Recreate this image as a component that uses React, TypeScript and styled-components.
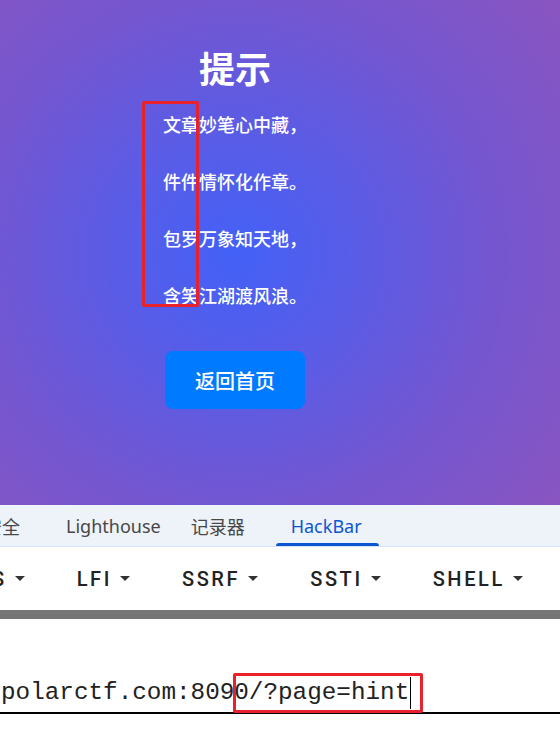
import React from "react";
import styled, { createGlobalStyle } from "styled-components";

const GlobalStyle = createGlobalStyle`
  html, body { margin: 0; padding: 0; background: #fff; }
  body { overflow: hidden; }
  * { box-sizing: border-box; }
`;

const Page = styled.div`
  width: 560px;
  height: 730px;
  display: flex;
  flex-direction: column;
  overflow: hidden;
  font-family: "Noto Sans", "Noto Sans CJK SC", sans-serif;
`;

const Hero = styled.section`
  position: relative;
  height: 505px;
  flex: none;
  background: radial-gradient(circle farthest-corner at 235px 255px, #4361f7 0%, #5a5ce6 30%, #7456d0 62%, #8a55c0 100%);
`;

const Column = styled.div`
  width: 470px;
  display: flex;
  flex-direction: column;
  align-items: center;
  padding-top: 46px;
`;

const Title = styled.h1`
  margin: 0;
  font-family: "Noto Sans CJK SC", sans-serif;
  font-size: 36px;
  line-height: 43px;
  font-weight: 700;
  color: #fff;
`;

const Poem = styled.div`
  width: 144px;
  margin-top: 22px;
  display: flex;
  flex-direction: column;
  gap: 30px;
`;

const Line = styled.p`
  margin: 0;
  font-family: "Noto Sans CJK SC", sans-serif;
  font-size: 18px;
  line-height: 27px;
  font-weight: 500;
  color: #fff;
  white-space: nowrap;
`;

const HomeButton = styled.button`
  margin-top: 42px;
  width: 140px;
  height: 58px;
  border: none;
  border-radius: 8px;
  background: #007bff;
  color: #fff;
  font-family: "Noto Sans CJK SC", sans-serif;
  font-size: 20px;
  font-weight: 500;
  cursor: pointer;
`;

const Mark = styled.div<{ $l: number; $t: number; $w: number; $h: number }>`
  position: absolute;
  left: ${(p) => p.$l}px;
  top: ${(p) => p.$t}px;
  width: ${(p) => p.$w}px;
  height: ${(p) => p.$h}px;
  border: 3px solid #e8212b;
  border-radius: 2px;
  pointer-events: none;
`;

const TabBar = styled.nav`
  height: 42px;
  flex: none;
  background: #eef2f9;
  border-bottom: 1px solid #d3e3fd;
  display: flex;
  overflow: hidden;
`;

const TabList = styled.div`
  display: flex;
  margin-left: -31px;
`;

const Tab = styled.div<{ $active?: boolean; $padRight?: number }>`
  position: relative;
  height: 41px;
  padding: 0 ${(p) => p.$padRight ?? 15}px 0 15px;
  display: flex;
  align-items: center;
  font-family: "Noto Sans", "Noto Sans CJK SC", sans-serif;
  font-size: 18px;
  color: ${(p) => (p.$active ? "#0b57d0" : "#474747")};
  white-space: nowrap;
  &::after {
    content: "";
    display: ${(p) => (p.$active ? "block" : "none")};
    position: absolute;
    left: 0;
    right: 0;
    bottom: -1px;
    height: 4px;
    border-radius: 3px 3px 0 0;
    background: #0b57d0;
  }
`;

const Toolbar = styled.div`
  height: 63px;
  flex: none;
  background: #fff;
  display: flex;
  align-items: center;
  overflow: hidden;
`;

const MenuList = styled.div`
  display: flex;
  margin-left: -64px;
`;

const MenuButton = styled.div`
  display: flex;
  align-items: center;
  padding: 0 26px;
  height: 40px;
  font-family: Roboto, "Noto Sans", sans-serif;
  font-size: 20px;
  font-weight: 500;
  letter-spacing: 2.6px;
  color: #222;
  text-transform: uppercase;
  white-space: nowrap;
`;

const Caret = styled.span`
  display: inline-block;
  margin-left: 8px;
  width: 0;
  height: 0;
  border-left: 5px solid transparent;
  border-right: 5px solid transparent;
  border-top: 5px solid #333;
`;

const Divider = styled.div`
  height: 9px;
  flex: none;
  background: #757575;
`;

const Editor = styled.div`
  position: relative;
  flex: 1;
  background: #fff;
  padding-top: 58px;
`;

const UrlField = styled.div`
  display: flex;
  align-items: center;
  padding: 0 0 3px 1px;
  border-bottom: 2px solid #000;
  font-family: "Liberation Mono", "DejaVu Sans Mono", monospace;
  font-size: 24.3px;
  line-height: 30px;
  color: #222;
  white-space: nowrap;
`;

const TextCaret = styled.span`
  display: inline-block;
  width: 1px;
  height: 32px;
  background: #000;
  margin-left: 1px;
`;

const tabs = [
  { label: "安全", pad: 31 },
  { label: "Lighthouse", pad: 15 },
  { label: "记录器", pad: 31 },
  { label: "HackBar", pad: 17, active: true },
];

const menus = ["XSS", "LFI", "SSRF", "SSTI", "SHELL"];

const poem = ["文章妙笔心中藏，", "件件情怀化作章。", "包罗万象知天地，", "含笑江湖渡风浪。"];

export default function App() {
  return (
    <>
      <GlobalStyle />
      <Page>
        <Hero>
          <Column>
            <Title>提示</Title>
            <Poem>
              {poem.map((l) => (
                <Line key={l}>{l}</Line>
              ))}
            </Poem>
            <HomeButton>返回首页</HomeButton>
          </Column>
          <Mark $l={142} $t={101} $w={57} $h={206} />
        </Hero>
        <TabBar>
          <TabList>
            {tabs.map((t) => (
              <Tab key={t.label} $active={t.active} $padRight={t.pad}>
                {t.label}
              </Tab>
            ))}
          </TabList>
        </TabBar>
        <Toolbar>
          <MenuList>
            {menus.map((m) => (
              <MenuButton key={m}>
                {m}
                <Caret />
              </MenuButton>
            ))}
          </MenuList>
        </Toolbar>
        <Divider />
        <Editor>
          <UrlField>
            polarctf.com:8090/?page=hint
            <TextCaret />
          </UrlField>
          <Mark $l={233} $t={54} $w={190} $h={40} />
        </Editor>
      </Page>
    </>
  );
}
